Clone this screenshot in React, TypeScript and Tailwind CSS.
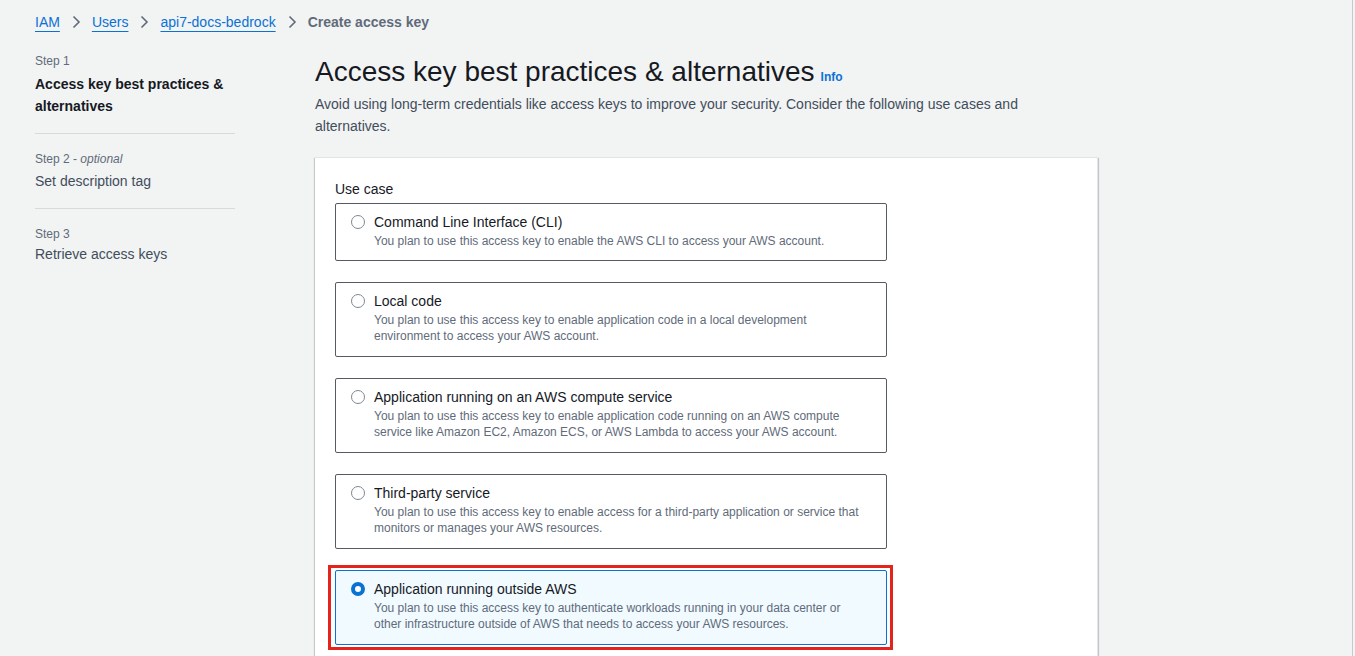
import React from 'react';

const useCases = [
  {
    title: 'Command Line Interface (CLI)',
    desc: 'You plan to use this access key to enable the AWS CLI to access your AWS account.',
    oneLine: true,
  },
  {
    title: 'Local code',
    desc: 'You plan to use this access key to enable application code in a local development environment to access your AWS account.',
  },
  {
    title: 'Application running on an AWS compute service',
    desc: 'You plan to use this access key to enable application code running on an AWS compute service like Amazon EC2, Amazon ECS, or AWS Lambda to access your AWS account.',
  },
  {
    title: 'Third-party service',
    desc: 'You plan to use this access key to enable access for a third-party application or service that monitors or manages your AWS resources.',
  },
  {
    title: 'Application running outside AWS',
    desc: 'You plan to use this access key to authenticate workloads running in your data center or other infrastructure outside of AWS that needs to access your AWS resources.',
    selected: true,
  },
];

function Chevron() {
  return (
    <svg width="16" height="16" viewBox="0 0 16 16" className="mx-2 shrink-0">
      <path d="M5.5 2.5 11 8l-5.5 5.5" fill="none" stroke="#5f6b7a" strokeWidth="1.6" />
    </svg>
  );
}

function Radio({ checked }: { checked?: boolean }) {
  return checked ? (
    <span className="mt-[3px] h-[14px] w-[14px] shrink-0 rounded-full border-[4px] border-[#0972d3] bg-white" />
  ) : (
    <span className="mt-[3px] h-[14px] w-[14px] shrink-0 rounded-full border-[1.5px] border-[#7d8998] bg-white" />
  );
}

export default function App() {
  return (
    <div
      className="flex min-h-[656px] w-[1355px] bg-[#f2f3f3] text-[#16191f]"
      style={{ fontFamily: '"Liberation Sans", Arial, sans-serif' }}
    >
      <div className="flex-1 pl-[35px]">
        {/* Breadcrumb */}
        <nav className="flex h-[20px] items-center mt-[12px] text-[14px] leading-5">
          <a className="text-[#0972d3] underline underline-offset-[4px] decoration-1">IAM</a>
          <Chevron />
          <a className="text-[#0972d3] underline underline-offset-[4px] decoration-1">Users</a>
          <Chevron />
          <a className="text-[#0972d3] underline underline-offset-[4px] decoration-1">api7-docs-bedrock</a>
          <Chevron />
          <span className="font-bold text-[#5f6b7a]">Create access key</span>
        </nav>

        <div className="mt-[21px] flex gap-[80px]">
          {/* Steps */}
          <aside className="w-[200px] shrink-0">
            <div className="pb-[16px] border-b border-[#d5dbdb]">
              <div className="text-[12px] leading-4 text-[#5f6b7a]">Step 1</div>
              <div className="mt-[4px] text-[14px] font-bold leading-[22px] text-[#16191f]">
                Access key best practices &amp; alternatives
              </div>
            </div>
            <div className="pt-[17px] pb-[16px] border-b border-[#d5dbdb]">
              <div className="text-[12px] leading-4 text-[#5f6b7a]">
                Step 2 - <span className="italic">optional</span>
              </div>
              <div className="mt-[3px] text-[14px] leading-[22px] text-[#414d5c]">Set description tag</div>
            </div>
            <div className="pt-[17px]">
              <div className="text-[12px] leading-4 text-[#5f6b7a]">Step 3</div>
              <div className="mt-[1px] text-[14px] leading-[22px] text-[#414d5c]">Retrieve access keys</div>
            </div>
          </aside>

          {/* Main */}
          <main className="w-[783px] shrink-0">
            <h1 className="mt-[1px] flex items-baseline text-[28px] leading-[36px] font-normal text-[#16191f]">
              Access key best practices &amp; alternatives
              <a className="ml-[6px] text-[12px] font-bold text-[#0972d3]">Info</a>
            </h1>
            <p className="-mt-[2px] max-w-[720px] text-[14px] leading-[22px] text-[#414d5c]">
              Avoid using long-term credentials like access keys to improve your security. Consider the following use cases and
              alternatives.
            </p>

            <section className="mt-[20px] bg-white px-[20px] pt-[20px] pb-[20px] border-t border-r border-[#e1e4e8] shadow-[0_1px_1px_0_rgba(0,28,36,0.3),1px_1px_1px_0_rgba(0,28,36,0.15),-1px_1px_1px_0_rgba(0,28,36,0.15)]">
              <div className="text-[14px] leading-[22px] text-[#16191f]">Use case</div>
              <div className="mt-[3px] flex w-[552px] flex-col gap-[21px]">
                {useCases.map((u) => (
                  <div key={u.title} className="relative">
                    <label
                      className={`flex gap-[9px] px-[15px] pt-[8px] border rounded-[2px] ${
                        u.oneLine ? 'pb-[11px]' : 'pb-[12px]'
                      } ${u.selected ? 'border-[#0972d3] bg-[#f1faff]' : 'border-[#545b64] bg-white'}`}
                    >
                      <Radio checked={u.selected} />
                      <div>
                        <div className="text-[14px] leading-[20px] text-[#16191f]">{u.title}</div>
                        <div className="mt-[1px] text-[12px] leading-4 text-[#5f6b7a]">{u.desc}</div>
                      </div>
                    </label>
                    {u.selected && (
                      <div className="pointer-events-none absolute -left-[7px] -right-[6px] -top-[5px] -bottom-[5px] border-[3px] border-[#e3231c]" />
                    )}
                  </div>
                ))}
              </div>
            </section>
          </main>
        </div>
      </div>
      <div className="w-px bg-[#c5cbcc]" />
      <div className="w-[2px]" />
    </div>
  );
}
